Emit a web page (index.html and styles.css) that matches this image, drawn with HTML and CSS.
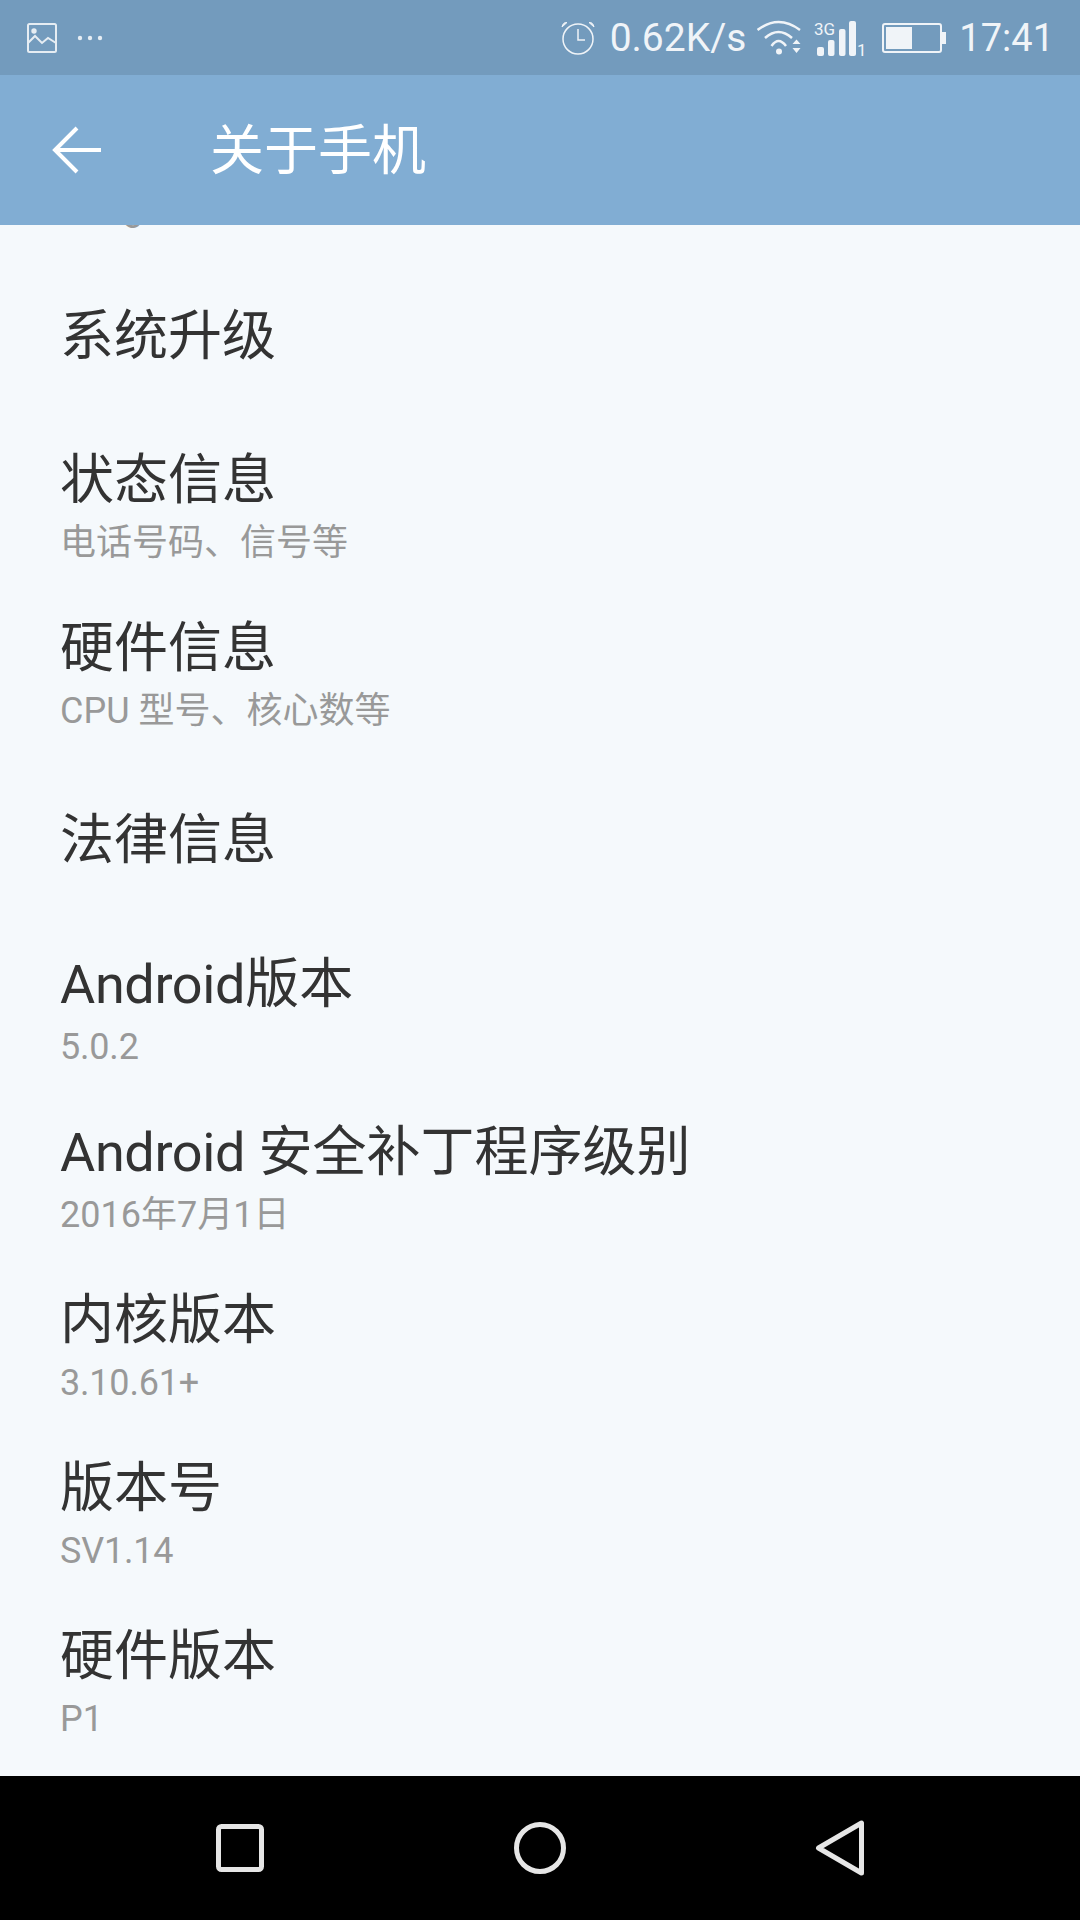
FILE: index.html
```html
<!DOCTYPE html>
<html lang="zh-CN">
<head>
<meta charset="utf-8">
<title>关于手机</title>
<link rel="stylesheet" href="styles.css">
</head>
<body>
<div class="phone">
  <div class="status">
    <svg class="ic-image" width="32" height="32" viewBox="0 0 32 32"><rect x="2" y="2" width="28" height="28" rx="1.5" fill="none" stroke="#e6edf3" stroke-width="2"/><circle cx="8" cy="9" r="2.700" fill="#e6edf3"/><path d="M2 21 L9 14 L16 21 L22 16 L30 21" fill="none" stroke="#e6edf3" stroke-width="2"/></svg>
    <svg class="ic-dots" width="26" height="6" viewBox="0 0 26 6"><circle cx="3" cy="3" r="2.200" fill="#e6edf3"/><circle cx="13" cy="3" r="2.200" fill="#e6edf3"/><circle cx="23" cy="3" r="2.200" fill="#e6edf3"/></svg>
    <div class="spacer"></div>
    <svg class="ic-alarm" width="34" height="34" viewBox="0 0 34 34"><circle cx="17" cy="18" r="15" fill="none" stroke="#f0f4f8" stroke-width="1.500"/><path d="M17 8 V19 H24" fill="none" stroke="#f0f4f8" stroke-width="1.500"/><path d="M1 6 L6 1.500 Q2 1 1 6 Z M33 6 L28 1.500 Q32 1 33 6 Z" fill="#f0f4f8" stroke="#f0f4f8"/></svg>
    <span class="speed">0.62K/s</span>
    <svg class="ic-wifi" width="44" height="36" viewBox="0 0 44 36"><path d="M0.500 10 Q21.500 -6 43 10" fill="none" stroke="#f0f4f8" stroke-width="2.500"/><path d="M8 18 Q21.500 6 35 18" fill="none" stroke="#f0f4f8" stroke-width="2.500"/><path d="M14.500 26 Q21.500 16 29 26" fill="none" stroke="#f0f4f8" stroke-width="2.500"/><circle cx="22" cy="31.500" r="3" fill="#f0f4f8"/><path d="M35.500 24 L39.500 19.500 L43.500 24 Z M35.500 28 L43.500 28 L39.500 33 Z" fill="#f0f4f8"/></svg>
    <svg class="ic-signal" width="52" height="36" viewBox="0 0 52 36"><text class="sig-text" x="0" y="14">3G</text><rect x="3" y="26" width="7" height="9" rx="2" fill="#f0f4f8"/><rect x="14" y="19" width="6.500" height="16" rx="2" fill="#f0f4f8"/><rect x="25" y="8" width="6.500" height="27" rx="2" fill="#f0f4f8"/><rect x="35" y="0" width="7" height="35" rx="2" fill="#f0f4f8"/><text class="sig-text" x="43" y="35">1</text></svg>
    <svg class="ic-battery" width="64" height="30" viewBox="0 0 64 30"><rect x="1" y="1" width="58" height="28" rx="2" fill="none" stroke="#f0f4f8" stroke-width="2"/><rect x="4" y="4" width="26" height="22" fill="#f0f4f8"/><rect x="59" y="9" width="5" height="12" fill="#f0f4f8"/></svg>
    <span class="time">17:41</span>
  </div>
  <header class="bar">
    <svg class="back" width="50" height="50" viewBox="0 0 50 50"><path d="M49 25 H4 M25 3 L3 25 L25 47" fill="none" stroke="#fff" stroke-width="4"/></svg>
    <h1 class="title">关于手机</h1>
  </header>
  <main class="list">
    <div class="row row-clipped"><div class="s">Pong</div></div>
    <div class="row row-single"><div class="t">系统升级</div></div>
    <div class="row"><div class="t">状态信息</div><div class="s">电话号码、信号等</div></div>
    <div class="row"><div class="t">硬件信息</div><div class="s">CPU 型号、核心数等</div></div>
    <div class="row row-single"><div class="t">法律信息</div></div>
    <div class="row"><div class="t"><span class="lat">Android</span>版本</div><div class="s num">5.0.2</div></div>
    <div class="row"><div class="t"><span class="lat">Android</span> 安全补丁程序级别</div><div class="s">2016年7月1日</div></div>
    <div class="row"><div class="t">内核版本</div><div class="s num">3.10.61+</div></div>
    <div class="row"><div class="t">版本号</div><div class="s num">SV1.14</div></div>
    <div class="row"><div class="t">硬件版本</div><div class="s">P1</div></div>
  </main>
  <nav class="nav">
    <svg width="48" height="48" viewBox="0 0 48 48"><rect x="2.500" y="2.500" width="43" height="43" rx="3" fill="none" stroke="#e6e6e6" stroke-width="5"/></svg>
    <svg width="52" height="52" viewBox="0 0 52 52"><circle cx="26" cy="26" r="23.500" fill="none" stroke="#e6e6e6" stroke-width="5"/></svg>
    <svg width="50" height="56" viewBox="0 0 50 56"><path d="M46.500 3 V53 L3.500 28 Z" fill="none" stroke="#e6e6e6" stroke-width="5" stroke-linejoin="round"/></svg>
  </nav>
</div>
</body>
</html>
```
FILE: styles.css
```css
* { box-sizing: border-box; }
html, body { margin: 0; padding: 0; }
body { font-family: Roboto, "Noto Sans CJK SC", sans-serif; }
.phone { width: 1080px; height: 1920px; display: flex; flex-direction: column; background: #f5f9fc; overflow: hidden; }

.status { height: 75px; flex: none; background: #739bbd; display: flex; align-items: center; padding: 0 26px 0 26px; color: #f0f4f8; }
.ic-dots { margin-left: 19px; }
.spacer { flex: 1; }
.speed { font-size: 39px; line-height: 46px; white-space: nowrap; margin-left: 15px; margin-right: 11px; }
.ic-signal { margin-left: 13px; margin-top: 2px; overflow: visible; }
.ic-battery { margin-left: 16px; }
.time { font-size: 38px; line-height: 46px; white-space: nowrap; margin-left: 13px; }
.sig-text { font-size: 17px; fill: #f0f4f8; font-family: Roboto, sans-serif; }

.bar { height: 150px; flex: none; background: #81add3; display: flex; align-items: center; padding-left: 52px; }
.title { margin: 0 0 8px 108px; font-size: 54px; font-weight: 400; color: #fff; }

.list { flex: 1; overflow: hidden; }
.row { height: 168px; padding: 31px 0 0 60px; }
.row-clipped { margin-top: -143px; padding-top: 106px; }
.row-single { display: flex; align-items: center; padding-top: 5px; }
.t { font-size: 54px; line-height: 64px; color: #333; }
.lat { letter-spacing: -0.35px; }
.s { font-size: 36px; line-height: 40px; margin-top: 10px; color: #999; }
.num { letter-spacing: -0.2px; }
.row-clipped .s { margin-top: 0; }

.nav { height: 144px; flex: none; background: #000; display: flex; align-items: center; justify-content: space-between; padding: 0 215px 0 216px; }
```
